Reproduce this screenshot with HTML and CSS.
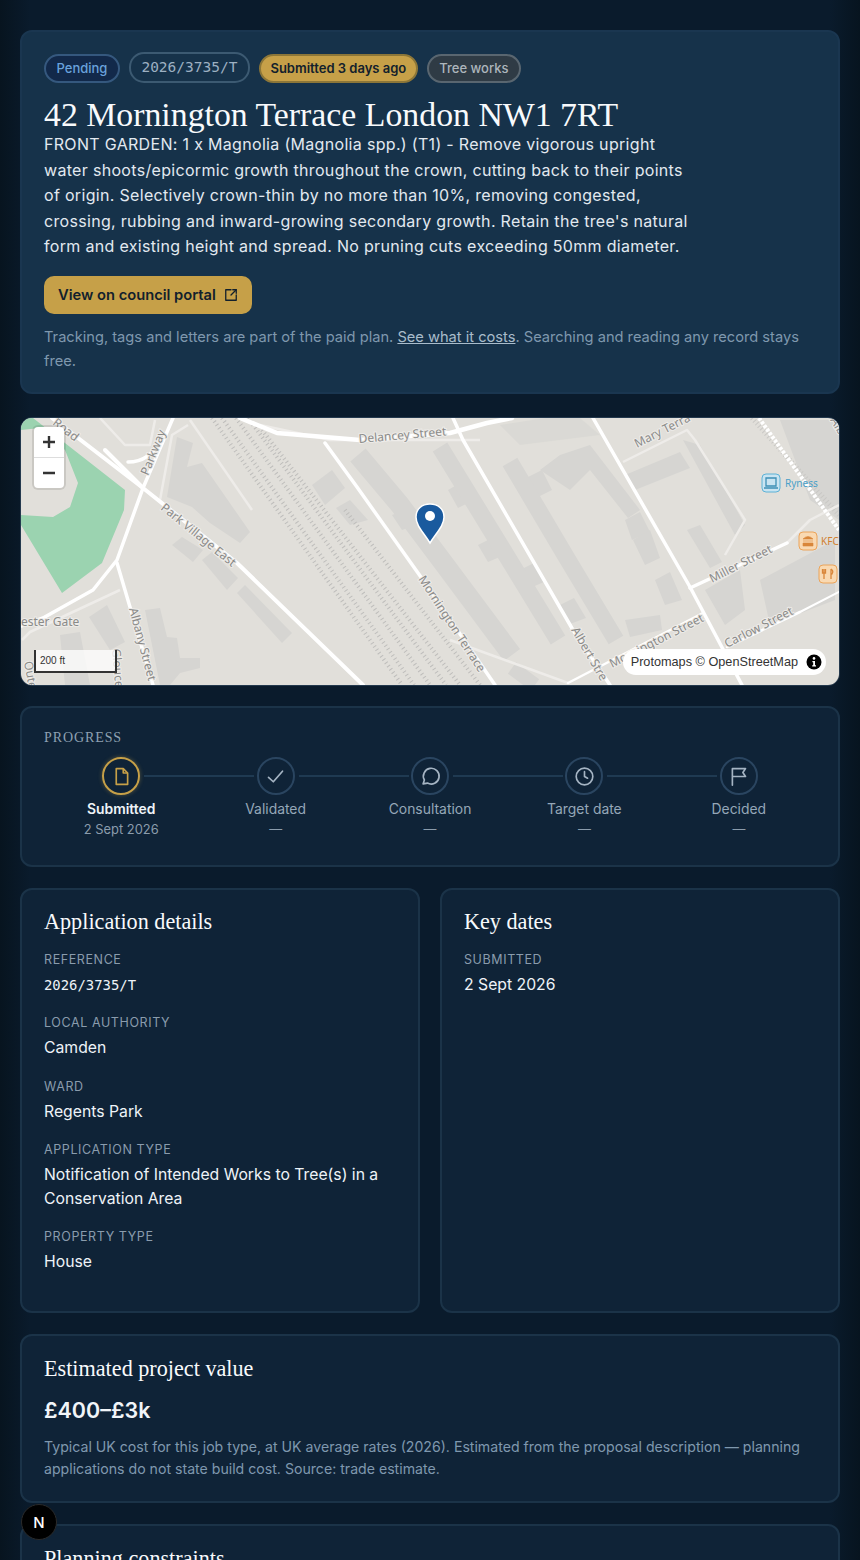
FILE: index.html
```html
<!DOCTYPE html>
<html>
<head>
    <title>42 Mornington Terrace London NW1 7RT</title>
    <link rel="stylesheet" href="styles.css">
</head>
<body>
    <div class="page">
        <section class="card hero">
            <div class="pills">
                <span class="pill pill-status">Pending</span>
                <span class="pill pill-ref">2026/3735/T</span>
                <span class="pill pill-age">Submitted 3 days ago</span>
                <span class="pill pill-tag">Tree works</span>
            </div>
            <h1>42 Mornington Terrace London NW1 7RT</h1>
            <p class="description">FRONT GARDEN: 1 x Magnolia (Magnolia spp.) (T1) - Remove vigorous upright water shoots/epicormic growth throughout the crown, cutting back to their points of origin. Selectively crown-thin by no more than 10%, removing congested, crossing, rubbing and inward-growing secondary growth. Retain the tree's natural form and existing height and spread. No pruning cuts exceeding 50mm diameter.</p>
            <a class="portal-button" href="#">View on council portal
                <svg width="14" height="14" viewBox="0 0 24 24" fill="none" stroke="currentColor" stroke-width="2.2" stroke-linecap="round" stroke-linejoin="round"><path d="M12 3H3v18h18v-9"/><path d="M21 3l-9 9"/><path d="M15 3h6v6"/></svg>
            </a>
            <p class="note">Tracking, tags and letters are part of the paid plan. <a href="#">See what it costs</a>. Searching and reading any record stays free.</p>
        </section>

        <section class="map">
            <svg class="map-canvas" viewBox="21 418 818 267" width="818" height="267">
                <rect x="21" y="418" width="818" height="267" fill="#e1dfda"/>

                <!-- park -->
                <path d="M21 418H33L125 490L124 510L102 563L62 593L21 525V515L53 517L70 507L78 483L65 450L40 428L21 430Z" fill="#9bd3b0"/>

                <!-- buildings -->
                <g fill="#d6d5d2">
                    <path d="M167 497L177 437L193 443L187 467L202 463L250 532L240 543L210 523L192 507Z"/>
                    <path d="M172 545L182 537L203 550L193 562Z"/>
                    <path d="M202 560L212 552L238 578L227 590Z"/>
                    <path d="M237 593L245 585L292 633L282 643Z"/>
                    <path d="M89 617L107 605L125 642L110 650Z"/>
                    <path d="M145 610L160 608L167 637L177 638L180 658L200 658L200 668L180 673L170 685L160 685Z"/>
                    <path d="M60 635L80 632L90 685H65Z"/>
                    <path d="M312 485L332 470L345 488L325 505Z"/>
                    <path d="M336 508L350 500L368 520L350 525Z"/>
                    <path d="M540 470L560 455L590 445L640 510L628 518L590 470L570 490Z"/>
                    <path d="M625 475L680 452L690 468L635 490Z"/>
                    <path d="M683 440L700 445L745 525L735 535Z"/>
                    <path d="M687 530L700 525L722 562L710 568Z"/>
                    <path d="M625 520L640 512L650 532L632 540Z"/>
                    <path d="M633 540L650 530L660 558L645 565Z"/>
                    <path d="M655 580L670 572L682 600L665 605Z"/>
                    <path d="M625 620L660 615L662 630L630 637Z"/>
                    <path d="M780 420H839V520L810 500Z"/>
                    <path d="M705 590L740 570L745 610L725 625Z"/>
                    <path d="M760 580L835 540V600L770 625Z"/>
                    <path d="M500 425L545 418H580L600 435L520 445Z" opacity=".6"/>
                    <path d="M448 490L462 482L474 500L458 508Z"/>
                    <path d="M478 545L492 538L502 556L488 562Z"/>
                    <path d="M392 515L410 508L420 524L402 530Z"/>
                    <path d="M526 478L542 470L552 490L536 498Z"/>
                    <path d="M520 570L534 563L544 582L530 588Z"/>
                    <path d="M560 605L574 598L586 618L570 624Z"/>
                </g>
                <g fill="none" stroke="#d6d5d2" stroke-linejoin="round">
                    <path d="M358 455L400 505L445 565L512 655" stroke-width="20"/>
                    <path d="M440 447L500 545L558 640" stroke-width="17"/>
                    <path d="M510 462L565 555L616 640" stroke-width="17"/>
                    <path d="M512 668L535 685" stroke-width="14"/>
                </g>

                <!-- railway -->
                <g fill="none" stroke="#bebdbb" stroke-width="4" stroke-dasharray="1 3">
                    <path d="M212 418L402 685"/>
                    <path d="M222 418L414 685"/>
                    <path d="M236 418L430 685"/>
                    <path d="M248 418L446 685"/>
                    <path d="M262 430L460 685"/>
                    <path d="M345 510L480 685"/>
                </g>
                <g fill="none" stroke="#c9c8c5" stroke-width="5" stroke-dasharray="1 2.5">
                    <path d="M752 418L839 515"/>
                </g>

                <!-- minor roads -->
                <g fill="none" stroke="#eeece9" stroke-width="2.5" stroke-linejoin="round">
                    <path d="M623 462L687 430L695 440L745 520L725 555"/>
                    <path d="M160 500L172 435L188 425"/>
                    <path d="M190 420L252 510"/>
                    <path d="M22 640L30 632L120 590"/>
                    <path d="M787 543L810 520L839 505"/>
                    <path d="M100 418L125 445L150 445L155 420"/>
                    <path d="M260 425L330 440H480"/>
                    <path d="M450 640L568 683"/>
                </g>

                <!-- roads -->
                <g fill="none" stroke="#fff" stroke-linecap="round" stroke-linejoin="round">
                    <path d="M52 418L143 488L237 563L363 685" stroke-width="4"/>
                    <path d="M105 450L143 488" stroke-width="4"/>
                    <path d="M173 418L143 488L117 560L93 590L43 618L21 626" stroke-width="3.5"/>
                    <path d="M117 563L153 685" stroke-width="3.5"/>
                    <path d="M128 462Q150 462 160 440" stroke-width="3.5"/>
                    <path d="M240 418L277 433L360 440L450 433L487 423L512 418" stroke-width="4.5"/>
                    <path d="M325 443L357 487L423 580L495 685" stroke-width="3.5"/>
                    <path d="M453 418L463 440L573 630L610 685" stroke-width="3.5"/>
                    <path d="M593 418L690 587L742 685" stroke-width="3.5"/>
                    <path d="M690 588L787 543" stroke-width="3.5"/>
                    <path d="M568 683L703 613" stroke-width="2.5"/>
                    <path d="M727 647L800 612" stroke-width="2.5"/>
                    <path d="M800 612L839 592" stroke-width="2"/>
                    <path d="M759 418L839 530" stroke-width="4" stroke-dasharray="3 1.5" stroke-linecap="butt"/>
                </g>

                <!-- road labels -->
                <g class="road-label">
                    <text transform="translate(52 424) rotate(38)">Road</text>
                    <text transform="translate(148 476) rotate(-68)">Parkway</text>
                    <text transform="translate(160 509) rotate(39)">Park Village East</text>
                    <text transform="translate(359 443) rotate(-5)">Delancey Street</text>
                    <text transform="translate(637 448) rotate(-27)">Mary Terra</text>
                    <text transform="translate(418 579) rotate(57)">Mornington Terrace</text>
                    <text transform="translate(571 630) rotate(60)">Albert Stre</text>
                    <text transform="translate(712 583) rotate(-27)">Miller Street</text>
                    <text transform="translate(612 668) rotate(-27)">Mornington Street</text>
                    <text transform="translate(727 648) rotate(-27)">Carlow Street</text>
                    <text x="21" y="626">ester Gate</text>
                    <text transform="translate(129 609) rotate(75)">Albany Street</text>
                    <text transform="translate(112 649) rotate(85)">Gloucester</text>
                    <text transform="translate(24 662) rotate(80)">Oute</text>
                    <text transform="translate(830 420) rotate(60)">Alb</text>
                </g>

                <!-- places -->
                <rect x="762" y="474" width="18" height="18" rx="4" fill="#c9e4f1" stroke="#5db2d6"/>
                <path d="M766 478H776V486H766ZM764 488H778" fill="none" stroke="#3d8fb5" stroke-width="1.3"/>
                <text class="place place-blue" x="785" y="487">Ryness</text>
                <rect x="799" y="532" width="18" height="18" rx="4" fill="#f9d9b2" stroke="#eba45a"/>
                <path d="M803 539Q808 534 813 539ZM803 541H813M803 543H813V546H803Z" fill="#d9863a" stroke="#d9863a" stroke-width=".6"/>
                <text class="place place-orange" x="821" y="545">KFC</text>
                <rect x="819" y="565" width="18" height="18" rx="4" fill="#f9d9b2" stroke="#eba45a"/>
                <path d="M824 569V579M822.5 569V573H825.5V569M831 569V579M831 569Q834 571 832 574H831" fill="none" stroke="#d9863a" stroke-width="1.3"/>

                <!-- pin -->
                <path d="M430 543C424 533 416 526 416 517C416 509 422 504 430 504C438 504 444 509 444 517C444 526 436 533 430 543Z" fill="#1a5a9e" stroke="#fff" stroke-width="1.5"/>
                <circle cx="430" cy="516" r="5" fill="#fff"/>
            </svg>

            <div class="zoom-control">
                <span class="zoom-button">
                    <svg width="14" height="14" viewBox="0 0 14 14"><path d="M7 1V13M1 7H13" stroke="#333" stroke-width="2.4"/></svg>
                </span>
                <span class="zoom-button">
                    <svg width="14" height="14" viewBox="0 0 14 14"><path d="M1 7H13" stroke="#333" stroke-width="2.4"/></svg>
                </span>
            </div>
            <div class="scale">200 ft</div>
            <div class="attribution">
                <span>Protomaps © OpenStreetMap</span>
                <svg width="16" height="16" viewBox="0 0 16 16"><circle cx="8" cy="8" r="7.5" fill="#000"/><circle cx="8" cy="4.4" r="1.3" fill="#fff"/><path d="M6.4 7H9V11.2H10V12.5H6.2V11.2H7.2V8.3H6.4Z" fill="#fff"/></svg>
            </div>
        </section>

        <section class="card progress">
            <h3>Progress</h3>
            <ol class="steps">
                <li class="step step-active">
                    <span class="step-icon">
                        <svg viewBox="0 0 24 24" fill="none" stroke="currentColor" stroke-width="1.9" stroke-linejoin="round"><path d="M6 3H14L19 8V21H6Z"/><path d="M14 3V8H19"/></svg>
                    </span>
                    <span class="step-name">Submitted</span>
                    <span class="step-date">2 Sept 2026</span>
                </li>
                <li class="step">
                    <span class="step-icon">
                        <svg viewBox="0 0 24 24" fill="none" stroke="currentColor" stroke-width="1.9" stroke-linecap="round" stroke-linejoin="round"><path d="M4 13L9.5 18L20 6"/></svg>
                    </span>
                    <span class="step-name">Validated</span>
                    <span class="step-date">—</span>
                </li>
                <li class="step">
                    <span class="step-icon">
                        <svg viewBox="0 0 24 24" fill="none" stroke="currentColor" stroke-width="1.9" stroke-linecap="round" stroke-linejoin="round"><path d="M3.5 20.5L5 16A9 9 0 1 1 8.5 19.5Z"/></svg>
                    </span>
                    <span class="step-name">Consultation</span>
                    <span class="step-date">—</span>
                </li>
                <li class="step">
                    <span class="step-icon">
                        <svg viewBox="0 0 24 24" fill="none" stroke="currentColor" stroke-width="1.9" stroke-linecap="round" stroke-linejoin="round"><circle cx="12" cy="12" r="9.5"/><path d="M12 6.5V12L15.5 14"/></svg>
                    </span>
                    <span class="step-name">Target date</span>
                    <span class="step-date">—</span>
                </li>
                <li class="step">
                    <span class="step-icon">
                        <svg viewBox="0 0 24 24" fill="none" stroke="currentColor" stroke-width="1.9" stroke-linecap="round" stroke-linejoin="round"><path d="M5 22V3H20L17 7.5L20 12H5"/></svg>
                    </span>
                    <span class="step-name">Decided</span>
                    <span class="step-date">—</span>
                </li>
            </ol>
        </section>

        <div class="columns">
            <section class="card panel">
                <h2>Application details</h2>
                <dl>
                    <dt>Reference</dt>
                    <dd class="mono">2026/3735/T</dd>
                    <dt>Local authority</dt>
                    <dd>Camden</dd>
                    <dt>Ward</dt>
                    <dd>Regents Park</dd>
                    <dt>Application type</dt>
                    <dd>Notification of Intended Works to Tree(s) in a Conservation Area</dd>
                    <dt>Property type</dt>
                    <dd>House</dd>
                </dl>
            </section>
            <section class="card panel">
                <h2>Key dates</h2>
                <dl>
                    <dt>Submitted</dt>
                    <dd>2 Sept 2026</dd>
                </dl>
            </section>
        </div>

        <section class="card panel estimate">
            <h2>Estimated project value</h2>
            <p class="amount">£400–£3k</p>
            <p class="estimate-note">Typical UK cost for this job type, at UK average rates (2026). Estimated from the proposal description — planning applications do not state build cost. Source: trade estimate.</p>
        </section>

        <section class="card panel">
            <h2>Planning constraints</h2>
        </section>
    </div>

    <div class="dev-badge">N</div>
</body>
</html>
```

FILE: styles.css
```css
html, body {
    height: 1560px;
    overflow: hidden;
}

body {
    margin: 0;
    font-family: Inter, "Liberation Sans", sans-serif;
    color: #f1f5f9;
    background-color: #0a1a2b;
    background-image: linear-gradient(90deg, #07141f 0, #0a1b2c 30px, #0a1b2c 830px, #07141f 860px);
}

.page {
    display: flex;
    flex-direction: column;
    gap: 21px;
    padding: 30px 20px 0;
}

.card {
    background-color: #0f2337;
    border: 2px solid #1b3348;
    border-radius: 12px;
    box-sizing: border-box;
}

.hero {
    height: 364px;
    padding: 19px 22px;
    background-color: #16324a;
    border-color: #1a3650;
}

.pills {
    display: flex;
    align-items: flex-end;
    gap: 9px;
    height: 32px;
}

.pill {
    display: inline-block;
    box-sizing: border-box;
    height: 29px;
    padding: 0 10.5px;
    border: 2px solid;
    border-radius: 15px;
    font-size: 13px;
    font-weight: 500;
    line-height: 25px;
}

.pill-status {
    background-color: #12294a;
    border-color: #35587e;
    color: #69a2dc;
}

.pill-ref {
    height: 31px;
    border-color: #3c5a72;
    color: #9db0c2;
    font-family: "DejaVu Sans Mono", monospace;
    font-size: 14.5px;
    font-weight: 400;
    line-height: 26px;
}

.pill-age {
    padding: 0 9.5px;
    background-color: #c6a048;
    border-color: #8c7638;
    color: #12202c;
    font-weight: 600;
}

.pill-tag {
    background-color: #2f3b45;
    border-color: #596670;
    color: #adb5bc;
}

h1 {
    margin: 14px 0 0;
    font-family: "Liberation Serif", serif;
    font-size: 33.8px;
    font-weight: 400;
    line-height: 35px;
    color: #f8fafc;
}

.description {
    width: 650px;
    margin: 0;
    font-size: 16px;
    letter-spacing: 0.315px;
    line-height: 25.6px;
    color: #e2e9f0;
}

.portal-button {
    display: inline-flex;
    align-items: center;
    gap: 8px;
    box-sizing: border-box;
    height: 38px;
    margin-top: 16px;
    padding: 0 14px;
    background-color: #c6a048;
    border-radius: 10px;
    color: #12202c;
    font-size: 14.7px;
    font-weight: 600;
    text-decoration: none;
}

.note {
    margin: 11px 0 0;
    font-size: 14.65px;
    line-height: 24px;
    color: #7f98ae;
}

.note a {
    color: #a9bccb;
    text-decoration: underline;
}

.map {
    position: relative;
    height: 269px;
    margin: 2px 0 -1px;
    overflow: hidden;
    box-sizing: border-box;
    border: 1px solid #24394e;
    border-radius: 12px;
}

.map-canvas {
    display: block;
}

.road-label text {
    font-family: "Noto Sans", sans-serif;
    font-size: 12px;
    fill: #8a8a88;
    stroke: #eeece9;
    stroke-width: 2px;
    paint-order: stroke;
}

.place {
    font-family: "Noto Sans", sans-serif;
    font-size: 10px;
}

.place-blue {
    fill: #4aa0c8;
}

.place-orange {
    fill: #d08030;
}

.zoom-control {
    position: absolute;
    top: 9px;
    left: 13px;
    display: flex;
    flex-direction: column;
    width: 30px;
    background-color: #fff;
    border-radius: 4px;
    box-shadow: 0 0 0 2px rgba(0, 0, 0, 0.1);
}

.zoom-button {
    display: flex;
    align-items: center;
    justify-content: center;
    height: 30px;
}

.zoom-button + .zoom-button {
    border-top: 1px solid #ddd;
}

.scale {
    position: absolute;
    left: 13px;
    bottom: 12px;
    box-sizing: border-box;
    width: 83px;
    height: 23px;
    padding-left: 4px;
    background-color: rgba(255, 255, 255, 0.75);
    border: 2px solid #333;
    border-top: none;
    font-family: "Liberation Sans", sans-serif;
    font-size: 10px;
    line-height: 21px;
    color: #333;
}

.attribution {
    position: absolute;
    right: 13px;
    bottom: 10px;
    display: flex;
    align-items: center;
    gap: 8px;
    box-sizing: border-box;
    height: 26px;
    padding: 0 4px 0 8px;
    background-color: #fff;
    border-radius: 13px;
    font-family: "Liberation Sans", sans-serif;
    font-size: 12.7px;
    color: #333;
}

.progress {
    height: 161px;
    padding: 21px 22px;
}

.progress h3 {
    margin: 0;
    font-family: "Liberation Serif", serif;
    font-size: 14px;
    font-weight: 400;
    letter-spacing: 0.9px;
    line-height: 18px;
    text-transform: uppercase;
    color: #8ea1b2;
}

.steps {
    display: flex;
    margin: 10px 0 0;
    padding: 0;
    list-style: none;
}

.step {
    position: relative;
    display: flex;
    flex-direction: column;
    align-items: center;
    flex: 1;
    margin: 0 -1px;
    min-width: 0;
}

.step:first-child::after,
.step + .step::after {
    content: "";
    position: absolute;
    top: 18px;
    left: calc(50% + 23px);
    width: 110px;
    border-top: 2px solid #1f3a52;
}

.step:last-child::after {
    display: none;
}

.step-icon {
    display: flex;
    align-items: center;
    justify-content: center;
    box-sizing: border-box;
    width: 38px;
    height: 38px;
    border: 2px solid #2a4560;
    border-radius: 50%;
    color: #a5b4c3;
}

.step-icon svg {
    width: 21px;
    height: 21px;
}

.step-name {
    margin-top: 4px;
    font-size: 13.9px;
    line-height: 20px;
    color: #95a7b8;
}

.step-date {
    margin-top: 1px;
    font-size: 12.9px;
    line-height: 20px;
    color: #8b9cac;
}

.step-active .step-icon {
    border-color: #c6a048;
    color: #c6a048;
    box-shadow: 0 0 4px rgba(198, 160, 72, 0.4);
}

.step-active .step-name {
    font-weight: 600;
    color: #eef3f8;
}

.columns {
    display: grid;
    grid-template-columns: 1fr 1fr;
    gap: 20px;
}

.panel {
    padding: 19px 22px;
}

.columns .panel {
    height: 425px;
    padding-top: 18px;
}

.panel h2 {
    margin: 0;
    font-family: "Liberation Serif", serif;
    font-size: 22.2px;
    font-weight: 400;
    line-height: 28px;
    color: #f8fafc;
}

dl {
    margin: 14px 0 0;
}

dt {
    font-size: 12.5px;
    letter-spacing: 0.6px;
    line-height: 20px;
    text-transform: uppercase;
    color: #8a9cad;
}

dd {
    margin: 3px 0 16.3px;
    font-size: 15.75px;
    line-height: 24px;
    color: #eef3f8;
}

.mono {
    font-family: "DejaVu Sans Mono", monospace;
    font-size: 13.9px;
}

.estimate {
    height: 169px;
}

.amount {
    margin: 12px 0 0;
    font-size: 21.5px;
    font-weight: 600;
    line-height: 30px;
    color: #f1f5f9;
}

.estimate-note {
    margin: 11px 0 0;
    font-size: 14.13px;
    line-height: 22px;
    color: #7f98ae;
}

.dev-badge {
    position: fixed;
    left: 21px;
    bottom: 20px;
    display: flex;
    align-items: center;
    justify-content: center;
    box-sizing: border-box;
    width: 36px;
    height: 36px;
    background-color: #000;
    border: 1px solid #2a2a2a;
    border-radius: 50%;
    font-size: 15px;
    font-weight: 500;
    color: #fff;
}
```
